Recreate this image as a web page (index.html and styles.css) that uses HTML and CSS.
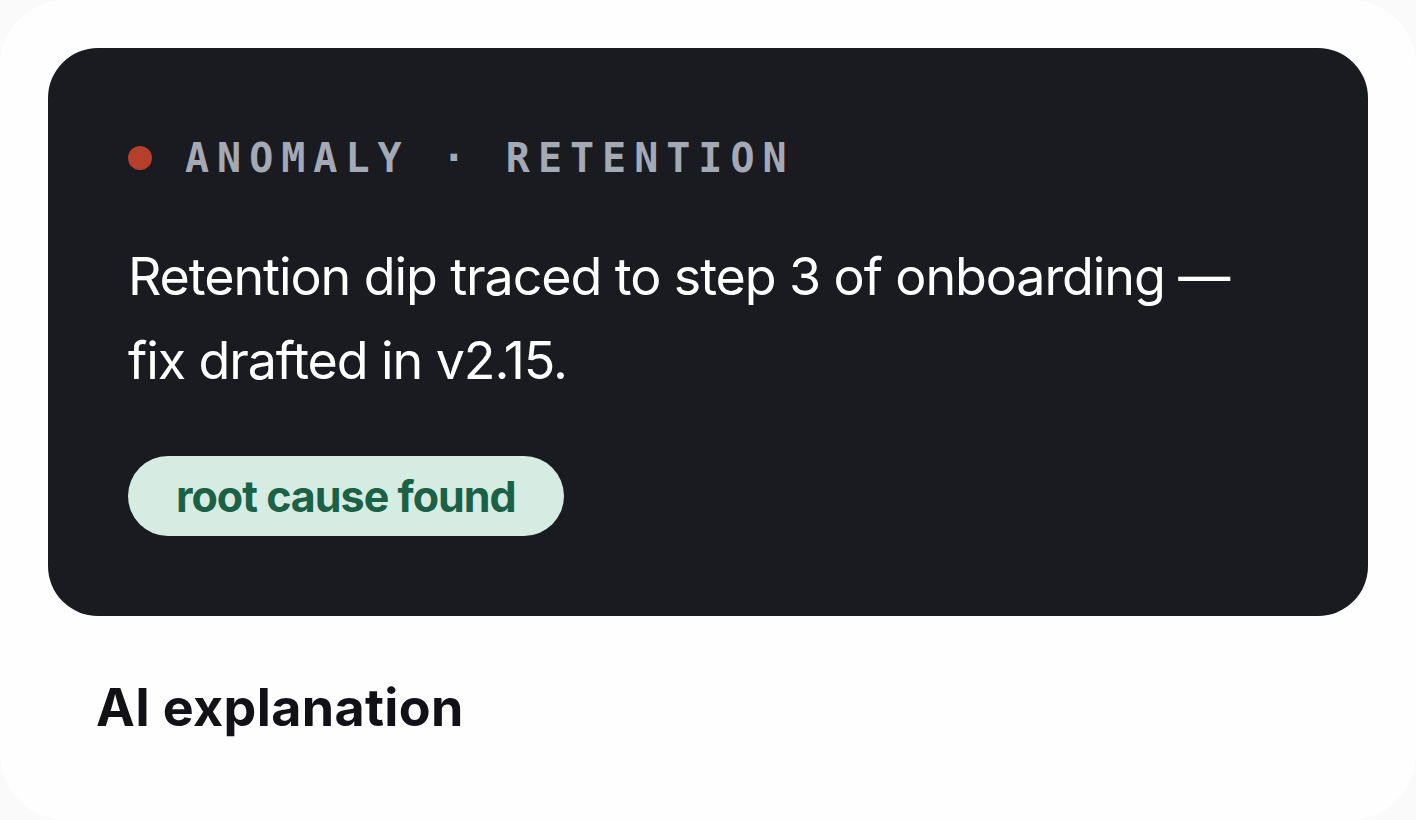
FILE: index.html
```html
<!DOCTYPE html>
<html lang="en">
<head>
<meta charset="utf-8">
<title>Anomaly</title>
<link rel="stylesheet" href="styles.css">
</head>
<body>
<div class="frame">
  <section class="insight">
    <div class="eyebrow"><span class="dot"></span><span class="eyebrow-text">ANOMALY · RETENTION</span></div>
    <p class="headline">Retention dip traced to step 3 of onboarding — fix drafted in v2.15.</p>
    <span class="pill">root cause found</span>
  </section>
  <h2 class="section-title">AI explanation</h2>
</div>
</body>
</html>
```
FILE: styles.css
```css
html, body {
  margin: 0;
  padding: 0;
  background: #fafafa;
}
body {
  font-family: "Inter", "Liberation Sans", sans-serif;
}
.frame {
  box-sizing: border-box;
  width: 1416px;
  height: 820px;
  background: #fefefe;
  border-radius: 66px;
  padding: 48px;
  overflow: hidden;
}
.insight {
  background: #1a1b21;
  border-radius: 50px;
  padding: 80px;
  display: flex;
  flex-direction: column;
  align-items: flex-start;
}
.eyebrow {
  display: flex;
  align-items: center;
  gap: 33px;
  height: 60px;
}
.dot {
  width: 24px;
  height: 24px;
  border-radius: 50%;
  background: #b63f2b;
  flex: none;
}
.eyebrow-text {
  font-family: "DejaVu Sans Mono", "Liberation Mono", monospace;
  font-size: 40px;
  font-weight: 700;
  letter-spacing: 8px;
  color: #a4a9b6;
  line-height: 60px;
}
.headline {
  margin: 47px 0 0;
  color: #ffffff;
  font-size: 52px;
  line-height: 84px;
  font-weight: 400;
  letter-spacing: -1.1px;
  max-width: 1160px;
}
.pill {
  margin-top: 53px;
  box-sizing: border-box;
  height: 80px;
  padding: 0 48px;
  display: inline-flex;
  align-items: center;
  border-radius: 40px;
  background: #d6ece2;
  color: #1a6146;
  font-size: 43px;
  font-weight: 700;
  letter-spacing: -1px;
}
.section-title {
  margin: 62px 0 0 48px;
  font-size: 52px;
  line-height: 60px;
  font-weight: 700;
  color: #111116;
  letter-spacing: 0.35px;
}
```
